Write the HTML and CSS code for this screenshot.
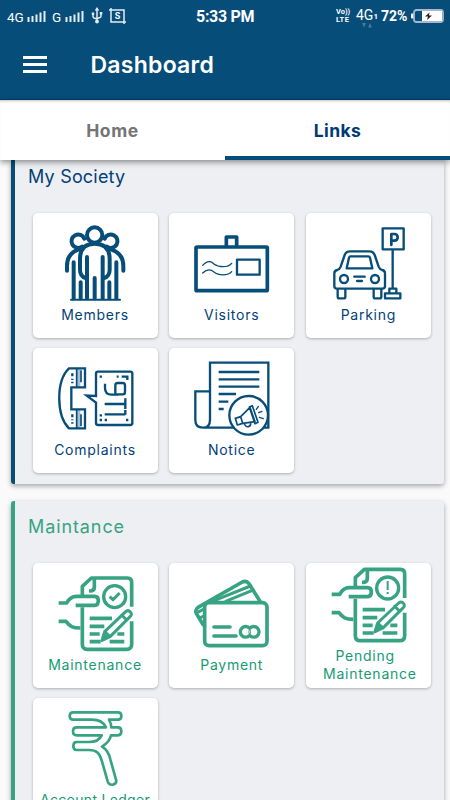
FILE: index.html
```
<!DOCTYPE html>
<html lang="en">
<head>
    <meta charset="utf-8">
    <meta name="viewport" content="width=device-width, initial-scale=1">
    <title>Dashboard</title>
    <link rel="stylesheet" href="styles.css">
</head>
<body>

<header class="app-header">
    <div class="status-bar">
        <div class="status-left">
            <span class="net net-4g">4G</span>
            <svg class="signal" width="19" height="13" viewBox="0 0 19 13"><path d="M1.500 7v5M5.500 6v6M9.500 4.500v7.500M13.500 2.500v9.500M17.500 1v11"/></svg>
            <span class="net net-g">G</span>
            <svg class="signal" width="19" height="13" viewBox="0 0 19 13"><path d="M1.500 7v5M5.500 6v6M9.500 4.500v7.500M13.500 2.500v9.500M17.500 1v11"/></svg>
            <svg class="usb" width="12" height="17" viewBox="0 0 12 17">
                <path class="thin" d="M6 3v11M2 7v2.500q0 1 1 1.500l3 1M10 6v3q0 1-1 1.500l-3 1"/>
                <path class="solid" d="M6 0l2.300 3.500H3.700zM.8 5.500h2.400v2.400H.8zM8.800 5h2.500v2.500H8.800z"/>
                <circle class="solid" cx="6" cy="14.500" r="1.900"/>
            </svg>
            <svg class="shot" width="17" height="16" viewBox="0 0 17 16">
                <path class="thin" d="M0 2h15v14M2 0v14h15"/>
                <text x="8.500" y="11.200">S</text>
            </svg>
        </div>
        <div class="clock">5:33 PM</div>
        <div class="status-right">
            <span class="volte"><span>Vo))</span><span class="lte">LTE</span></span>
            <span class="data"><span class="data-type">4G</span><span class="sim">1</span><svg class="arrows" width="12" height="5" viewBox="0 0 12 5"><path d="M1 0h4L3 4.500zM7 4.500h4L9 0z"/></svg></span>
            <span class="percent">72%</span>
            <svg class="battery" width="33" height="14" viewBox="0 0 33 14">
                <rect x="0" y="4.500" width="3" height="5" rx="1" fill="#fff"/>
                <rect x="3" y="1" width="29" height="12" rx="2.500" fill="#074d79" stroke="#a9b7cc" stroke-width="1.800"/>
                <path d="M11 2h20v10H11z" fill="#fff"/>
                <path d="M18.500 3.500l-4.500 4h3l-1 3.500 5-4.500h-3z" fill="#222"/>
            </svg>
        </div>
    </div>
    <div class="toolbar">
        <button class="menu-btn" aria-label="Menu"><span></span><span></span><span></span></button>
        <h1>Dashboard</h1>
    </div>
</header>

<nav class="tabs">
    <a class="tab">Home</a>
    <a class="tab active">Links</a>
</nav>

<main>
    <section class="panel society">
        <h2>My Society</h2>
        <div class="grid">
            <div class="card">
                <svg class="icon" viewBox="22 23 375 279" stroke-width="12">
                    <circle cx="207" cy="89" r="23"/>
                    <path d="M176 100a20 20 0 1 0-7 24M237 100a20 20 0 1 1 7 24"/>
                    <path d="M180 218q-17-5-17-25v-32c0-30 14-46 44-46s45 16 45 46v32q0 20-17 25"/>
                    <path d="M159 132q-35 12-35 50v14M256 132q37 12 37 50v14"/>
                    <path d="M144 171v108M184 155v124M231 155v124M272 171v108M165 231v48M207 218v61M251 231v48"/>
                    <path d="M136 283h147" stroke-width="6"/>
                </svg>
                <span class="label">Members</span>
            </div>
            <div class="card">
                <svg class="icon" viewBox="22 23 375 279" stroke-width="11">
                    <rect x="103" y="125" width="214" height="131" rx="3"/>
                    <path d="M194 123V95h31v28"/>
                    <rect x="226" y="163" width="68" height="45" stroke-width="7"/>
                    <path d="M123 180c15-16 25-13 34-4 13 10 42 12 53-2M123 203c15-14 25-11 34-3 13 11 42 12 53-1" stroke-width="4"/>
                </svg>
                <span class="label">Visitors</span>
            </div>
            <div class="card">
                <svg class="icon" viewBox="17 23 375 279" stroke-width="7">
                    <path d="M110 250q-8 0-8-8v-38q0-8 9-10 7-2 10-10l12-35q4-11 16-11h58q12 0 16 11l12 35q3 8 10 10 9 2 9 10v38q0 8-8 8z"/>
                    <path d="M150 153h54q4 0 5 4l7 32h-77l7-32q1-4 4-4z"/>
                    <circle cx="131" cy="221" r="12"/><circle cx="224" cy="221" r="12"/>
                    <path d="M162 214h31M170 227h15M112 252v22q0 5 5 5h13q5 0 5-5v-22M220 252v22q0 5 5 5h13q5 0 5-5v-22"/>
                    <path d="M247 69h63v63h-63zM277 132v117M267 264v-14h21v14M254 264h46v15h-46z"/>
                    <path d="M273 119V86h9q10 0 10 10t-10 10h-8" stroke-width="8"/>
                </svg>
                <span class="label">Parking</span>
            </div>
            <div class="card">
                <svg class="icon" viewBox="22 23 375 279" stroke-width="7">
                    <path class="shade" d="M152 85h12v56h-12zM152 208h12v56h-12z"/>
                    <path class="sharp" d="M178 84h-48c-40 38-38 143 0 180h48v-57h-41v-66h41z"/>
                    <path class="sharp" d="M153 84v57M153 207v57M166 90v36M166 222v36" stroke-width="5"/>
                    <path d="M140 99v9M140 115v4M140 124v5M140 222v9M140 237v3M140 246v4" stroke-linecap="butt"/>
                    <path class="sharp" d="M211 187v61q0 6 6 6h97q6 0 6-6V100q0-6-6-6h-97q-6 0-6 6v67l-28-1z"/>
                    <path class="sharp" d="M238 130v13q0 20 20 20h21M269 162v-27q0-7 7-7h15q7 0 7 7v20q0 7-7 7h-21M299 174v32M299 191h-62M299 209v14M299 222h-62M288 109h17v10"/>
                    <path d="M222 109h7M273 109h6M222 225h7M222 239h7M237 239h7M301 239h7" stroke-width="7" stroke-linecap="butt"/>
                </svg>
                <span class="label">Complaints</span>
            </div>
            <div class="card">
                <svg class="icon" viewBox="22 23 375 279" stroke-width="7">
                    <path class="sharp" d="M145 238V67h175v195H124q-23 0-23-23v-86h44M145 238q0 24-21 24"/>
                    <path class="sharp" d="M171 95h122M171 117h122M171 139h122M171 161h52M171 184h29M171 206h15"/>
                    <circle cx="261" cy="225" r="58" fill="#fff"/>
                    <path d="M221 234l16-5 6 20-16 5zM237 229l28-28 15 43-37 5M263 200l9-4 17 50-9 4zM248 251q5 10 12 8 8-2 7-12" stroke-width="5"/>
                    <path d="M284 207l6-9M291 217l10-4M293 231l12 4" stroke-width="4"/>
                </svg>
                <span class="label">Notice</span>
            </div>
        </div>
    </section>

    <section class="panel maintenance">
        <h2>Maintance</h2>
        <div class="grid">
            <div class="card">
                <svg class="icon" viewBox="97 278 375 279" stroke-width="11">
                    <g id="contract">
                        <path d="M245 375v-27l27-25h108q13 0 13 13v73M245 411v111q0 15 15 15h118q15 0 15-15v-69M281 325v25q0 12-12 12h-4" stroke-linecap="butt"/>
                        <path d="M174 398h24c7-13 15-20 29-20h55q11 0 11 13t-11 14h-57M174 453h22c11 15 20 20 43 20" stroke-linecap="butt"/>
                        <circle cx="342" cy="379" r="33" stroke-width="10"/>
                        <path d="M267 444h67M267 468h44M267 491h30M267 514h33M327 514h44M350 491h21" stroke-linecap="butt"/>
                        <path d="M304 510l8-26 63-60q6-6 13 0 8 7 1 14l-60 60zM363 434l15 15M313 485l15 14" stroke-width="9"/>
                        <path class="fill" d="M300 516l9-29 18 15z"/>
                    </g>
                    <path class="sharp" d="M327 379l10 9 20-20" stroke-width="9"/>
                </svg>
                <span class="label">Maintenance</span>
            </div>
            <div class="card">
                <svg class="icon" viewBox="22 23 375 279" stroke-width="11">
                    <path d="M124 208l-20-34q-5-10 5-18L242 80q12-6 20 5l32 51"/>
                    <path d="M108 171l25-13M114 188l12-6M150 139L266 92M190 139l82-34" stroke-width="9" stroke-linecap="butt"/>
                    <rect x="129" y="142" width="187" height="129" rx="13" fill="#fff"/>
                    <path d="M157 215h48M157 242h66"/>
                    <path d="M264 219a16 16 0 1 0 0 21 16 16 0 1 0 0-21z" stroke-width="10"/>
                    <path d="M264 221q-6 9 0 17 6-8 0-17z" stroke-width="3"/>
                </svg>
                <span class="label">Payment</span>
            </div>
            <div class="card two-line">
                <svg class="icon" viewBox="97 304 375 253" stroke-width="11">
                    <use href="#contract"/>
                    <path d="M342 358v27M342 391v6" stroke-width="6" stroke-linecap="butt"/>
                </svg>
                <span class="label">Pending&nbsp;&nbsp;<br>Maintenance</span>
            </div>
            <div class="card">
                <svg class="icon" viewBox="97 23 375 279" stroke-width="8">
                    <path d="M218 66h134q10 0 10 11t-10 11h-27q6 10 7 23h20q10 0 10 12t-10 12h-21q-4 20-27 34 19 11 25 38l17 61q3 12-9 15-12 2-16-10l-18-63c-6-22-15-31-38-31h-37q-10 0-10-12t10-12h37q29 0 38-20h-75q-11 0-11-12t11-12h88c-7-15-20-23-42-23h-56q-11 0-11-11t11-11z"/>
                </svg>
                <span class="label ledger">Account Ledger</span>
            </div>
        </div>
    </section>
</main>

</body>
</html>
```
FILE: styles.css
```
* {
    box-sizing: border-box;
}
body {
    margin: 0;
    height: 800px;
    overflow: hidden;
    background: #fafafa;
    font-family: Inter, "Liberation Sans", sans-serif;
    display: flex;
    flex-direction: column;
}
.app-header {
    height: 100px;
    flex: none;
    background: #074d79;
    border-bottom: 1px solid #053b70;
    color: #fff;
}
.status-bar {
    height: 32px;
    display: grid;
    grid-template-columns: 196px 1fr 114px;
    align-items: center;
    font-family: Roboto, sans-serif;
}
.status-left,
.status-right {
    display: flex;
    align-items: center;
}
.status-left {
    padding-left: 7px;
}
.net {
    font-size: 13.5px;
    line-height: 16px;
    padding-top: 2px;
}
.net-4g {
    width: 20px;
}
.net-g {
    width: 13px;
    margin-left: 6px;
}
.signal path {
    stroke: #e3ebf4;
    stroke-width: 2;
}
.usb {
    margin: 0 6px 2px 7px;
}
.thin {
    fill: none;
    stroke: #e3ebf4;
    stroke-width: 1.5;
}
.solid {
    fill: #e3ebf4;
}
.shot text {
    font: bold 9px Roboto, sans-serif;
    text-anchor: middle;
    fill: #fff;
}
.clock {
    font-size: 16px;
    font-weight: 700;
    letter-spacing: -.3px;
    white-space: nowrap;
}
.volte {
    display: flex;
    flex-direction: column;
    width: 20px;
    font-size: 7.5px;
    line-height: 8px;
    font-weight: 700;
}
.lte {
    letter-spacing: .4px;
}
.data {
    display: flex;
    position: relative;
    width: 25px;
    font-size: 14px;
    line-height: 18px;
    height: 20px;
}
.sim {
    font-size: 8px;
    font-weight: 700;
    line-height: 21px;
}
.arrows {
    position: absolute;
    left: 5px;
    top: 17px;
    fill: #4a7898;
}
.percent {
    width: 30px;
    font-size: 14px;
    font-weight: 700;
}
.toolbar {
    height: 65px;
    display: flex;
    align-items: center;
    padding-left: 23px;
}
.menu-btn {
    width: 24px;
    height: 17px;
    padding: 0;
    border: 0;
    background: none;
    display: flex;
    flex-direction: column;
    justify-content: space-between;
}
.menu-btn span {
    width: 24px;
    height: 3px;
    background: #fff;
}
h1 {
    margin: 0 0 0 43.5px;
    font-size: 23px;
    line-height: 30px;
    font-weight: 600;
    letter-spacing: .25px;
}
.tabs {
    height: 60px;
    flex: none;
    display: flex;
    background: #fff;
    position: relative;
    z-index: 1;
    box-shadow: 0 2px 6px rgba(0, 0, 0, .45), inset 0 3px 3px -2px rgba(0, 0, 0, .25);
}
.tab {
    flex: 1;
    display: flex;
    align-items: center;
    justify-content: center;
    padding-top: 4px;
    border-bottom: 4px solid transparent;
    font-size: 17.5px;
    font-weight: 700;
    letter-spacing: .6px;
    color: #757575;
}
.tab.active {
    color: #003b75;
    border-color: #074d79;
    letter-spacing: .4px;
}
main {
    flex: 1;
    min-height: 0;
    overflow: hidden;
    padding: 0 6px 0 11px;
}
.panel {
    background: #eeeff2;
    border-left: 4px solid;
    border-radius: 3px;
    box-shadow: 0 2px 5px rgba(0, 0, 0, .35);
    padding-left: 17.5px;
}
.society {
    color: #074d79;
    height: 324px;
    border-top-left-radius: 0;
}
.maintenance {
    color: #38a383;
    height: 400px;
    margin-top: 17px;
}
h2 {
    margin: 0 0 0 -4.5px;
    font-size: 18px;
    line-height: 24px;
    font-weight: 400;
}
.society h2 {
    color: #033f78;
    padding-top: 5px;
    height: 52.5px;
    letter-spacing: .2px;
}
.maintenance h2 {
    padding-top: 13.5px;
    height: 61.5px;
    letter-spacing: .9px;
}
.grid {
    display: grid;
    grid-template-columns: repeat(3, 125px);
    grid-auto-rows: 125px;
    gap: 10px 11.7px;
}
.card {
    background: #fff;
    border-radius: 5px;
    box-shadow: 0 1px 3px rgba(0, 0, 0, .28);
    display: flex;
    flex-direction: column;
    align-items: center;
}
.icon {
    width: 125px;
    height: 93px;
    flex: none;
    fill: none;
    stroke: currentColor;
    stroke-linecap: round;
    stroke-linejoin: round;
}
.icon .sharp {
    stroke-linecap: butt;
    stroke-linejoin: miter;
}
.icon .shade {
    fill: #a8c0d2;
    stroke: none;
}
.icon .fill {
    fill: currentColor;
    stroke: none;
}
.label {
    font-size: 14px;
    line-height: 18px;
    letter-spacing: .75px;
    text-align: center;
    white-space: nowrap;
}
.society .label {
    color: #033f78;
}
.maintenance .label {
    color: #169b75;
}
.maintenance .ledger {
    letter-spacing: .3px;
}
.two-line .icon {
    height: 84.3px;
}
.two-line .label {
    padding-left: 3px;
}
```
